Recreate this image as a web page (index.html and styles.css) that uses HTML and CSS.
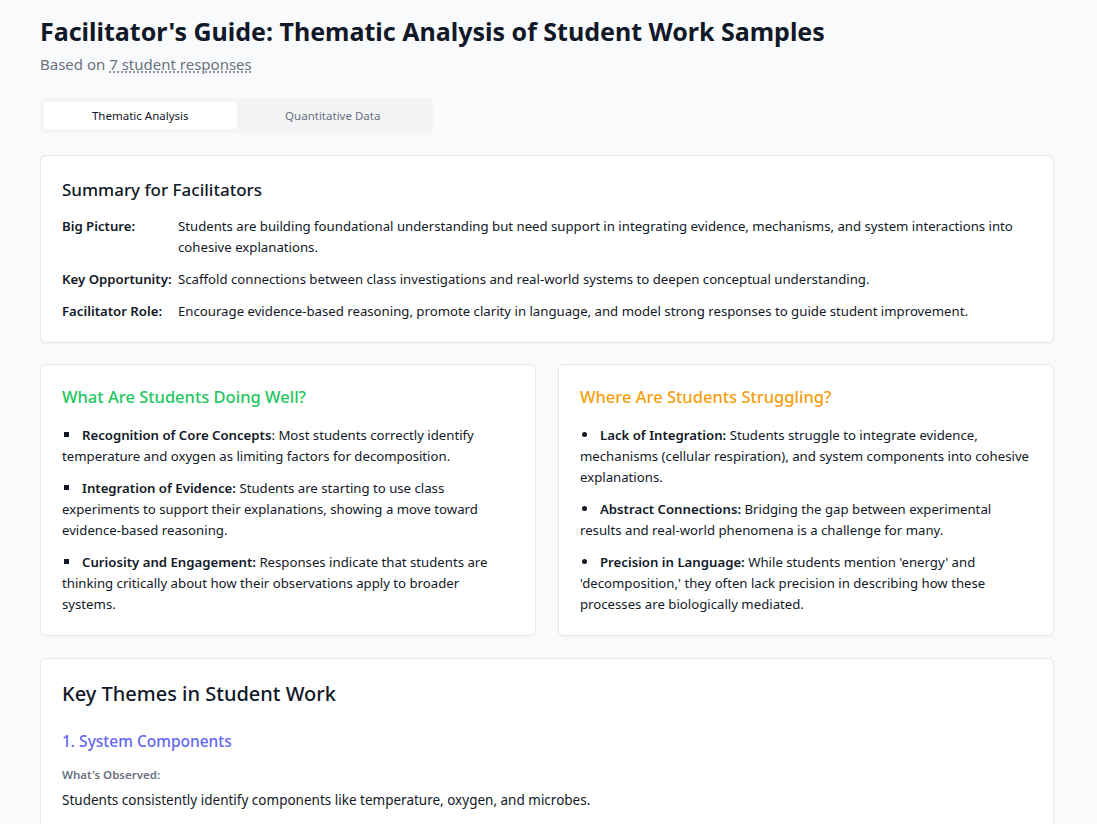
FILE: index.html
```html
<!DOCTYPE html>
<html lang="en">
<head>
<meta charset="utf-8">
<title>Facilitator's Guide</title>
<link rel="stylesheet" href="styles.css">
</head>
<body>
<main class="page">
  <header class="header">
    <h1 class="title">Facilitator's Guide: Thematic Analysis of Student Work Samples</h1>
    <p class="subtitle">Based on <span class="dotted">7 student responses</span></p>
  </header>

  <nav class="tabs">
    <button class="tab tab-active">Thematic Analysis</button>
    <button class="tab">Quantitative Data</button>
  </nav>

  <section class="card summary">
    <h2 class="card-title">Summary for Facilitators</h2>
    <div class="row">
      <span class="label">Big Picture:</span>
      <span class="value">Students are building foundational understanding but need support in integrating evidence, mechanisms, and system interactions into cohesive explanations.</span>
    </div>
    <div class="row">
      <span class="label">Key Opportunity:</span>
      <span class="value">Scaffold connections between class investigations and real-world systems to deepen conceptual understanding.</span>
    </div>
    <div class="row">
      <span class="label">Facilitator Role:</span>
      <span class="value">Encourage evidence-based reasoning, promote clarity in language, and model strong responses to guide student improvement.</span>
    </div>
  </section>

  <div class="two-col">
    <section class="card">
      <h3 class="col-title green">What Are Students Doing Well?</h3>
      <ul class="list">
        <li><span class="bullet square"></span><strong>Recognition of Core Concepts</strong>: Most students correctly identify temperature and oxygen as limiting factors for decomposition.</li>
        <li><span class="bullet square"></span><strong>Integration of Evidence:</strong> Students are starting to use class experiments to support their explanations, showing a move toward evidence-based reasoning.</li>
        <li><span class="bullet square"></span><strong>Curiosity and Engagement:</strong> Responses indicate that students are thinking critically about how their observations apply to broader systems.</li>
      </ul>
    </section>
    <section class="card">
      <h3 class="col-title orange">Where Are Students Struggling?</h3>
      <ul class="list">
        <li><span class="bullet disc"></span><strong>Lack of Integration:</strong> Students struggle to integrate evidence, mechanisms (cellular respiration), and system components into cohesive explanations.</li>
        <li><span class="bullet disc"></span><strong>Abstract Connections:</strong> Bridging the gap between experimental results and real-world phenomena is a challenge for many.</li>
        <li><span class="bullet disc"></span><strong>Precision in Language:</strong> While students mention 'energy' and 'decomposition,' they often lack precision in describing how these processes are biologically mediated.</li>
      </ul>
    </section>
  </div>

  <section class="card themes">
    <h2 class="themes-title">Key Themes in Student Work</h2>
    <h3 class="theme-name">1. System Components</h3>
    <p class="observed-label">What's Observed:</p>
    <p class="observed-text">Students consistently identify components like temperature, oxygen, and microbes.</p>
  </section>
</main>
</body>
</html>
```

FILE: styles.css
```css
* { box-sizing: border-box; }
html, body { margin: 0; padding: 0; }
body {
  background: #f9fafb;
  font-family: "Noto Sans", "Open Sans", sans-serif;
  color: #111827;
}
.page {
  width: 1014px;
  margin-left: 40px;
  padding-top: 14px;
}
.header { margin-bottom: 23px; }
.title {
  margin: 0;
  font-size: 25px;
  line-height: 34px;
  font-weight: 700;
  color: #111827;
}
.subtitle {
  margin: 5px 0 0;
  font-size: 15px;
  line-height: 22px;
  color: #6b7280;
}
.dotted {
  text-decoration: underline dotted;
  text-underline-offset: 2px;
}
.tabs {
  display: flex;
  width: 393px;
  padding: 4px;
  background: #f3f4f6;
  border-radius: 4px;
  margin-bottom: 22px;
}
.tab {
  flex: 1;
  border: 0;
  background: transparent;
  font-family: inherit;
  font-size: 11.5px;
  line-height: 27px;
  height: 27px;
  padding: 0;
  color: #6b7280;
  border-radius: 3px;
}
.tab-active {
  background: #fff;
  color: #111827;
}
.card {
  background: #fff;
  border: 1px solid #e5e7eb;
  border-radius: 6px;
  box-shadow: 0 1px 2px rgba(0,0,0,0.04);
  padding: 20px 21px;
}
.summary { margin-bottom: 21px; padding-bottom: 20px; }
.card-title {
  margin: 0 0 12px;
  font-size: 17px;
  line-height: 28px;
  font-weight: 500;
}
.row {
  display: flex;
  font-size: 13.2px;
  line-height: 21px;
  margin-bottom: 11px;
}
.row:last-child { margin-bottom: 0; }
.label {
  flex-shrink: 0;
  min-width: 116px;
  padding-right: 4px;
  font-weight: 600;
}
.two-col {
  display: grid;
  grid-template-columns: 1fr 1fr;
  gap: 22px;
  margin-bottom: 22px;
}
.two-col .card { padding-top: 18px; padding-bottom: 20px; }
.col-title {
  margin: 0 0 14px;
  font-size: 16.5px;
  line-height: 28px;
  font-weight: 500;
}
.green { color: #22c55e; }
.orange { color: #f59e0b; }
.list {
  margin: 0;
  padding: 0;
  list-style: none;
  font-size: 13.2px;
  line-height: 21px;
}
.list li { margin-bottom: 11px; }
.list li:last-child { margin-bottom: 0; }
.bullet {
  display: inline-block;
  width: 5px;
  height: 5px;
  background: #111827;
  margin: 0 13px 0 2px;
  vertical-align: 3px;
}
.bullet.disc { border-radius: 50%; }
.list strong { font-weight: 600; }
.themes { padding-top: 20px; }
.themes-title {
  margin: 0 0 20px;
  font-size: 20px;
  line-height: 30px;
  font-weight: 500;
}
.theme-name {
  margin: 0 0 13px;
  font-size: 15.5px;
  line-height: 24px;
  font-weight: 500;
  color: #6366f1;
}
.observed-label {
  margin: 0 0 6px;
  font-size: 11.5px;
  line-height: 18px;
  font-weight: 600;
  color: #6b7280;
}
.observed-text {
  margin: 0;
  font-size: 13.5px;
  line-height: 21px;
}
```
